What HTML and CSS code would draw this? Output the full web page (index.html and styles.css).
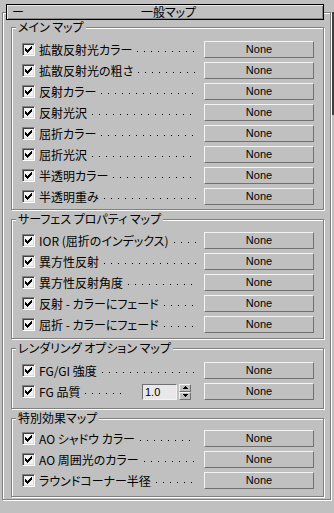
FILE: index.html
```html
<!DOCTYPE html>
<html lang="ja">
<head>
<meta charset="utf-8">
<link rel="stylesheet" href="styles.css">
</head>
<body>
<div class="app">
  <div class="main">
    <div class="frame">
      <div class="header"><span class="minus">ー</span><span class="title">一般マップ</span></div>

      <div class="group g1">
        <div class="legend">メイン マップ</div>
        <div class="row"><span class="cb"><svg viewBox="0 0 11 11"><path d="M8 2h1v1h-1zM7 3h2v1h-2zM2 4h1v1h-1zM6 4h3v1h-3zM2 5h2v1h-2zM5 5h3v1h-3zM2 6h5v1h-5zM3 7h3v1h-3zM4 8h1v1h-1z"/></svg></span><span class="label">拡散反射光カラー</span><span class="dots"></span><span class="btn">None</span></div>
        <div class="row"><span class="cb"><svg viewBox="0 0 11 11"><path d="M8 2h1v1h-1zM7 3h2v1h-2zM2 4h1v1h-1zM6 4h3v1h-3zM2 5h2v1h-2zM5 5h3v1h-3zM2 6h5v1h-5zM3 7h3v1h-3zM4 8h1v1h-1z"/></svg></span><span class="label">拡散反射光の粗さ</span><span class="dots"></span><span class="btn">None</span></div>
        <div class="row"><span class="cb"><svg viewBox="0 0 11 11"><path d="M8 2h1v1h-1zM7 3h2v1h-2zM2 4h1v1h-1zM6 4h3v1h-3zM2 5h2v1h-2zM5 5h3v1h-3zM2 6h5v1h-5zM3 7h3v1h-3zM4 8h1v1h-1z"/></svg></span><span class="label">反射カラー</span><span class="dots"></span><span class="btn">None</span></div>
        <div class="row"><span class="cb"><svg viewBox="0 0 11 11"><path d="M8 2h1v1h-1zM7 3h2v1h-2zM2 4h1v1h-1zM6 4h3v1h-3zM2 5h2v1h-2zM5 5h3v1h-3zM2 6h5v1h-5zM3 7h3v1h-3zM4 8h1v1h-1z"/></svg></span><span class="label">反射光沢</span><span class="dots"></span><span class="btn">None</span></div>
        <div class="row"><span class="cb"><svg viewBox="0 0 11 11"><path d="M8 2h1v1h-1zM7 3h2v1h-2zM2 4h1v1h-1zM6 4h3v1h-3zM2 5h2v1h-2zM5 5h3v1h-3zM2 6h5v1h-5zM3 7h3v1h-3zM4 8h1v1h-1z"/></svg></span><span class="label">屈折カラー</span><span class="dots"></span><span class="btn">None</span></div>
        <div class="row"><span class="cb"><svg viewBox="0 0 11 11"><path d="M8 2h1v1h-1zM7 3h2v1h-2zM2 4h1v1h-1zM6 4h3v1h-3zM2 5h2v1h-2zM5 5h3v1h-3zM2 6h5v1h-5zM3 7h3v1h-3zM4 8h1v1h-1z"/></svg></span><span class="label">屈折光沢</span><span class="dots"></span><span class="btn">None</span></div>
        <div class="row"><span class="cb"><svg viewBox="0 0 11 11"><path d="M8 2h1v1h-1zM7 3h2v1h-2zM2 4h1v1h-1zM6 4h3v1h-3zM2 5h2v1h-2zM5 5h3v1h-3zM2 6h5v1h-5zM3 7h3v1h-3zM4 8h1v1h-1z"/></svg></span><span class="label">半透明カラー</span><span class="dots"></span><span class="btn">None</span></div>
        <div class="row"><span class="cb"><svg viewBox="0 0 11 11"><path d="M8 2h1v1h-1zM7 3h2v1h-2zM2 4h1v1h-1zM6 4h3v1h-3zM2 5h2v1h-2zM5 5h3v1h-3zM2 6h5v1h-5zM3 7h3v1h-3zM4 8h1v1h-1z"/></svg></span><span class="label">半透明重み</span><span class="dots"></span><span class="btn">None</span></div>
      </div>

      <div class="group g2">
        <div class="legend">サーフェス プロパティ マップ</div>
        <div class="row"><span class="cb"><svg viewBox="0 0 11 11"><path d="M8 2h1v1h-1zM7 3h2v1h-2zM2 4h1v1h-1zM6 4h3v1h-3zM2 5h2v1h-2zM5 5h3v1h-3zM2 6h5v1h-5zM3 7h3v1h-3zM4 8h1v1h-1z"/></svg></span><span class="label">IOR (屈折のインデックス)</span><span class="dots"></span><span class="btn">None</span></div>
        <div class="row"><span class="cb"><svg viewBox="0 0 11 11"><path d="M8 2h1v1h-1zM7 3h2v1h-2zM2 4h1v1h-1zM6 4h3v1h-3zM2 5h2v1h-2zM5 5h3v1h-3zM2 6h5v1h-5zM3 7h3v1h-3zM4 8h1v1h-1z"/></svg></span><span class="label">異方性反射</span><span class="dots"></span><span class="btn">None</span></div>
        <div class="row"><span class="cb"><svg viewBox="0 0 11 11"><path d="M8 2h1v1h-1zM7 3h2v1h-2zM2 4h1v1h-1zM6 4h3v1h-3zM2 5h2v1h-2zM5 5h3v1h-3zM2 6h5v1h-5zM3 7h3v1h-3zM4 8h1v1h-1z"/></svg></span><span class="label">異方性反射角度</span><span class="dots"></span><span class="btn">None</span></div>
        <div class="row"><span class="cb"><svg viewBox="0 0 11 11"><path d="M8 2h1v1h-1zM7 3h2v1h-2zM2 4h1v1h-1zM6 4h3v1h-3zM2 5h2v1h-2zM5 5h3v1h-3zM2 6h5v1h-5zM3 7h3v1h-3zM4 8h1v1h-1z"/></svg></span><span class="label">反射 - カラーにフェード</span><span class="dots"></span><span class="btn">None</span></div>
        <div class="row"><span class="cb"><svg viewBox="0 0 11 11"><path d="M8 2h1v1h-1zM7 3h2v1h-2zM2 4h1v1h-1zM6 4h3v1h-3zM2 5h2v1h-2zM5 5h3v1h-3zM2 6h5v1h-5zM3 7h3v1h-3zM4 8h1v1h-1z"/></svg></span><span class="label">屈折 - カラーにフェード</span><span class="dots"></span><span class="btn">None</span></div>
      </div>

      <div class="group g3">
        <div class="legend">レンダリング オプション マップ</div>
        <div class="row"><span class="cb"><svg viewBox="0 0 11 11"><path d="M8 2h1v1h-1zM7 3h2v1h-2zM2 4h1v1h-1zM6 4h3v1h-3zM2 5h2v1h-2zM5 5h3v1h-3zM2 6h5v1h-5zM3 7h3v1h-3zM4 8h1v1h-1z"/></svg></span><span class="label">FG/GI 強度</span><span class="dots"></span><span class="btn">None</span></div>
        <div class="row"><span class="cb"><svg viewBox="0 0 11 11"><path d="M8 2h1v1h-1zM7 3h2v1h-2zM2 4h1v1h-1zM6 4h3v1h-3zM2 5h2v1h-2zM5 5h3v1h-3zM2 6h5v1h-5zM3 7h3v1h-3zM4 8h1v1h-1z"/></svg></span><span class="label">FG 品質</span><span class="dots short"></span><span class="field">1.0</span><span class="spin"><span class="arrow"><svg viewBox="0 0 5 3"><path d="M2 0h1v1h1v1h1v1h-5v-1h1v-1h1z"/></svg></span><span class="arrow"><svg viewBox="0 0 5 3"><path d="M0 0h5v1h-1v1h-1v1h-1v-1h-1v-1h-1z"/></svg></span></span><span class="btn">None</span></div>
      </div>

      <div class="group g4">
        <div class="legend">特別効果マップ</div>
        <div class="row"><span class="cb"><svg viewBox="0 0 11 11"><path d="M8 2h1v1h-1zM7 3h2v1h-2zM2 4h1v1h-1zM6 4h3v1h-3zM2 5h2v1h-2zM5 5h3v1h-3zM2 6h5v1h-5zM3 7h3v1h-3zM4 8h1v1h-1z"/></svg></span><span class="label">AO シャドウ カラー</span><span class="dots"></span><span class="btn">None</span></div>
        <div class="row"><span class="cb"><svg viewBox="0 0 11 11"><path d="M8 2h1v1h-1zM7 3h2v1h-2zM2 4h1v1h-1zM6 4h3v1h-3zM2 5h2v1h-2zM5 5h3v1h-3zM2 6h5v1h-5zM3 7h3v1h-3zM4 8h1v1h-1z"/></svg></span><span class="label">AO 周囲光のカラー</span><span class="dots"></span><span class="btn">None</span></div>
        <div class="row"><span class="cb"><svg viewBox="0 0 11 11"><path d="M8 2h1v1h-1zM7 3h2v1h-2zM2 4h1v1h-1zM6 4h3v1h-3zM2 5h2v1h-2zM5 5h3v1h-3zM2 6h5v1h-5zM3 7h3v1h-3zM4 8h1v1h-1z"/></svg></span><span class="label">ラウンドコーナー半径</span><span class="dots"></span><span class="btn">None</span></div>
      </div>
    </div>
  </div>
  <div class="scroll"><div class="thumb"></div></div>
</div>
</body>
</html>
```

FILE: styles.css
```css
* { box-sizing: border-box; }

html, body {
  margin: 0;
  padding: 0;
  background: #c0c0c0;
}

body {
  width: 334px;
  height: 513px;
  overflow: hidden;
  font-family: "Noto Sans CJK JP", "Liberation Sans", sans-serif;
  font-size: 12px;
  font-feature-settings: "palt";
  color: #000;
}

.app {
  display: flex;
  align-items: flex-start;
}

.main {
  width: 331px;
  flex: none;
}

.frame {
  margin: 12px 0 0 2px;
  width: 329px;
  border: 1px solid #808080;
  box-shadow: inset 1px 1px 0 #fff, 1px 1px 0 #fff;
  padding: 0 0 2px 0;
}

.header {
  margin: -9px 0 0 3px;
  width: 318px;
  height: 16px;
  border: 1px solid #000;
  box-shadow: inset 1px 1px 0 #e8e8e8, inset -1px -1px 0 #8c8c8c;
  background: #c0c0c0;
  display: flex;
  align-items: center;
  line-height: 14px;
  position: relative;
}

.minus {
  padding-left: 5px;
  width: 17px;
  flex: none;
}

.title {
  flex: 1;
  text-align: center;
  padding-right: 10px;
}

.group {
  margin: 9px 0 0 8px;
  width: 313px;
  border: 1px solid #808080;
  box-shadow: inset 1px 1px 0 #fff, 1px 1px 0 #fff;
  padding: 0 9px 2px 10px;
}

.g1 { margin-top: 7px; padding-bottom: 2px; }
.g2 { padding-bottom: 3px; }
.g3 { padding-bottom: 6px; }
.g4 { padding-bottom: 5px; }

.legend {
  width: fit-content;
  height: 14px;
  line-height: 14px;
  margin: -8px 0 5px -6px;
  padding: 0 2px;
  background: #c0c0c0;
  white-space: nowrap;
}

.g2 .legend { margin-bottom: 4px; }
.g4 .legend { margin-bottom: 3px; }

.row {
  display: flex;
  align-items: center;
  height: 21px;
}

.cb {
  flex: none;
  width: 13px;
  height: 13px;
  border: 1px solid;
  border-color: #808080 #fff #fff #808080;
  box-shadow: inset 1px 1px 0 #404040, inset -1px -1px 0 #dcdcdc;
  background: #f2f2f2;
  display: flex;
}

.cb svg {
  width: 11px;
  height: 11px;
  fill: #000;
  shape-rendering: crispEdges;
}

.label {
  margin-left: 4px;
  white-space: nowrap;
  line-height: 14px;
}

.dots {
  flex: 1;
  align-self: stretch;
  margin: 0 8px 0 5px;
  background-image: linear-gradient(to right, #000 1px, transparent 1px);
  background-size: 7px 1px;
  background-repeat: repeat-x;
  background-position: 0 12px;
}

.dots.short {
  margin-right: 18px;
}

.btn {
  flex: none;
  width: 110px;
  height: 17px;
  border: 1px solid;
  border-color: #f4f4f4 #707070 #707070 #f4f4f4;
  font-family: "Liberation Sans", sans-serif;
  font-size: 11px;
  font-feature-settings: normal;
  line-height: 15px;
  text-align: center;
  background: #c0c0c0;
}

.field {
  flex: none;
  width: 35px;
  height: 16px;
  border: 1px solid;
  border-color: #707070 #f4f4f4 #f4f4f4 #707070;
  background: #e8e8e8;
  font-family: "Liberation Sans", sans-serif;
  font-size: 11px;
  line-height: 14px;
  padding-left: 2px;
}

.spin {
  flex: none;
  width: 12px;
  height: 16px;
  margin: 0 13px 0 2px;
  display: flex;
  flex-direction: column;
}

.arrow {
  flex: 1;
  border: 1px solid;
  border-color: #f4f4f4 #707070 #707070 #f4f4f4;
  display: flex;
  align-items: center;
  justify-content: center;
}

.arrow svg {
  width: 5px;
  height: 3px;
  fill: #000;
  shape-rendering: crispEdges;
}

.scroll {
  width: 3px;
  flex: none;
  padding-left: 1px;
}

.thumb {
  margin-top: 12px;
  width: 2px;
  height: 103px;
  background: #404040;
}
```
